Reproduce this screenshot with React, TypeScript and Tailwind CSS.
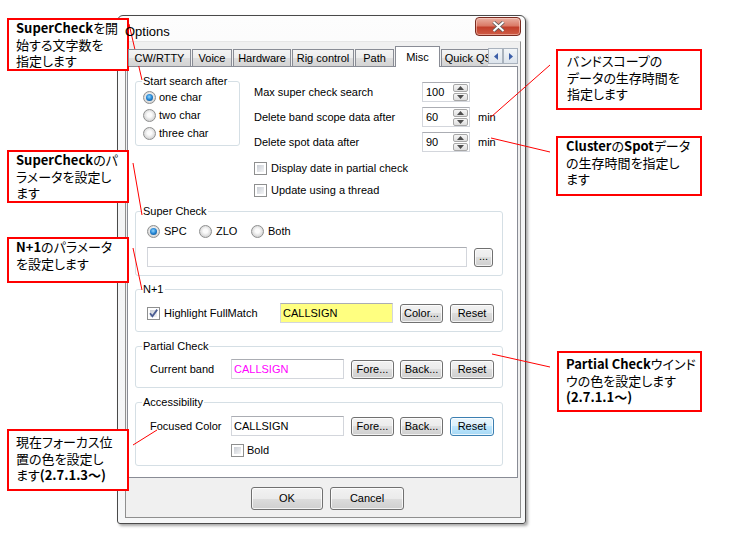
import type { ReactNode } from "react"

const tabs = [
  { label: "CW/RTTY", w: "w-[63px]" },
  { label: "Voice", w: "w-[40px]" },
  { label: "Hardware", w: "w-[58px]" },
  { label: "Rig control", w: "w-[62px]" },
  { label: "Path", w: "w-[39px]" },
  { label: "Misc", w: "w-[45px]", active: true },
  { label: "Quick QSY", w: "w-[62px]" },
]

function Radio({ on }: { on?: boolean }) {
  return (
    <span className="flex h-[13px] w-[13px] shrink-0 items-center justify-center rounded-full border border-[#8e8f8f] bg-[radial-gradient(circle_at_50%_45%,#fbfbfb_25%,#d6d6d6_70%,#ececec)]">
      {on && (
        <span className="h-[7px] w-[7px] rounded-full bg-[radial-gradient(circle_at_45%_40%,#8fd6ff,#2283d2_50%,#0d3f70)]" />
      )}
    </span>
  )
}

function Check({ on }: { on?: boolean }) {
  return (
    <span className="relative flex h-[13px] w-[13px] shrink-0 border border-[#8e8f8f] bg-white p-[2px]">
      <span className="h-full w-full bg-[linear-gradient(135deg,#c9cdd4,#f4f5f6)]" />
      {on && (
        <svg className="absolute left-[-1px] top-[-1px]" width="13" height="13" viewBox="0 0 13 13">
          <path d="M3 6.2 L5.4 9.2 L10.2 2.6" fill="none" stroke="#4a5c92" strokeWidth="1.8" />
        </svg>
      )}
    </span>
  )
}

function Btn({ w, children, focus }: { w: string; children: ReactNode; focus?: boolean }) {
  return (
    <span
      className={`flex h-[19px] shrink-0 items-center justify-center rounded-[3px] border shadow-[inset_0_0_0_1px_rgba(255,255,255,0.75)] ${w} ${
        focus
          ? "border-[#3c7fb1] bg-[linear-gradient(#eaf6fd,#d9f0fc_50%,#bee6fd_50%,#a7d9f5)]"
          : "border-[#707070] bg-[linear-gradient(#f2f2f2,#ebebeb_50%,#dddddd_50%,#cfcfcf)]"
      }`}
    >
      {children}
    </span>
  )
}

function Field({ w, children, className = "" }: { w: string; children?: ReactNode; className?: string }) {
  return (
    <span
      className={`flex h-[20px] shrink-0 items-center border border-[#d3d6dc] border-t-[#abadb3] pl-[2px] ${w} ${className}`}
    >
      {children}
    </span>
  )
}

function Arrow({ up }: { up?: boolean }) {
  return (
    <span className="flex h-[8px] w-[15px] items-center justify-center rounded-[2px] border border-[#a7a7a7] bg-[linear-gradient(#f6f6f6,#dedede)]">
      <svg width="7" height="4" viewBox="0 0 7 4">
        <path d={up ? "M0 4 L3.5 0 L7 4 Z" : "M0 0 L3.5 4 L7 0 Z"} fill="#4d4d4d" />
      </svg>
    </span>
  )
}

function Spin({ value }: { value: string }) {
  return (
    <span className="flex h-[20px] w-[48px] shrink-0 items-center border border-[#d3d6dc] border-t-[#abadb3] bg-white pl-[3px] pr-[1px]">
      <span className="flex-1">{value}</span>
      <span className="flex flex-col gap-[1px]">
        <Arrow up />
        <Arrow />
      </span>
    </span>
  )
}

function Group({ title, h, className = "", children }: { title: string; h: string; className?: string; children: ReactNode }) {
  return (
    <fieldset className={`rounded-[3px] border border-[#d5dfe5] ${h} ${className}`}>
      <legend className="ml-[6px] px-[1px] leading-[14px]">{title}</legend>
      {children}
    </fieldset>
  )
}

function B({ children }: { children: ReactNode }) {
  return <span className="font-bold">{children}</span>
}

function Note({ className, children }: { className: string; children: ReactNode }) {
  return (
    <div
      className={`absolute whitespace-nowrap border-2 border-[#ff0000] bg-white font-['Noto_Sans_CJK_JP',sans-serif] text-[13px] leading-[16.5px] text-black [font-feature-settings:'palt'] ${className}`}
    >
      {children}
    </div>
  )
}

export default function App() {
  return (
    <div className="relative h-[538px] w-[730px] overflow-hidden bg-white font-['Liberation_Sans',Arial,sans-serif] text-[11px] text-black">
      {/* dialog */}
      <div className="ml-[117px] mt-[15px] flex h-[509px] w-[409px] flex-col rounded-t-[6px] rounded-b-[3px] border border-[#4a4a4a] bg-[linear-gradient(180deg,#fdfdfd,#f3f4f5_40%,#f6f7f8)] pb-[5px] pl-[7px] pr-[4px] shadow-[2px_2px_3px_rgba(0,0,0,0.35)]">
        <div className="flex h-[25px] items-start">
          <span className="relative z-20 flex-1 pt-[8px] text-[13px] leading-[15px]">Options</span>
          <span className="mt-[1px] flex h-[19px] w-[46px] items-center justify-center rounded-[4px] border border-[#7a2b20] bg-[linear-gradient(#eab0a2,#da7b68_45%,#c23f2b_55%,#cf5c45)] shadow-[inset_0_0_0_1px_rgba(255,220,210,0.5)]">
            <svg width="13" height="11" viewBox="0 0 13 11">
              <path d="M1.5 1 L11.5 10 M11.5 1 L1.5 10" stroke="#5a5a5a" strokeWidth="3.6" />
              <path d="M1.5 1 L11.5 10 M11.5 1 L1.5 10" stroke="#ffffff" strokeWidth="2" />
            </svg>
          </span>
        </div>

        {/* client area */}
        <div className="flex flex-1 flex-col border border-[#8f8f8f] border-t-[#e6e6e6] bg-[#f0f0f0] pt-[4px]">
          {/* tab strip */}
          <div className="relative z-10 -mb-[1px] ml-[2px] flex h-[21px] w-[390px]">
            <div className="flex flex-1 items-start gap-[1px] overflow-hidden">
              {tabs.map((t) =>
                t.active ? (
                  <span
                    key={t.label}
                    className={`flex h-[21px] shrink-0 justify-center border border-b-0 border-[#898c95] bg-white pt-[3px] leading-[14px] ${t.w}`}
                  >
                    {t.label}
                  </span>
                ) : (
                  <span
                    key={t.label}
                    className={`mt-[3px] flex h-[17px] shrink-0 items-center justify-center whitespace-nowrap border border-b-0 border-[#898c95] bg-[linear-gradient(#f4f4f4,#ececec_50%,#dedede_50%,#d3d3d3)] ${t.w}`}
                  >
                    {t.label}
                  </span>
                )
              )}
            </div>
            <div className="mt-[2px] flex h-[16px]">
              {[true, false].map((left) => (
                <span
                  key={String(left)}
                  className="flex h-[16px] w-[15px] items-center justify-center border border-[#a9b2bd] bg-[linear-gradient(#f2f5f8,#dde4ec)]"
                >
                  <svg width="4" height="7" viewBox="0 0 4 7">
                    <path d={left ? "M4 0 L0 3.5 L4 7 Z" : "M0 0 L4 3.5 L0 7 Z"} fill="#3b5ea8" />
                  </svg>
                </span>
              ))}
            </div>
          </div>

          {/* tab page */}
          <div className="ml-[1px] flex h-[412px] w-[391px] flex-col border border-[#898c95] bg-white pl-[7px] pr-[14px] pt-[7px]">
            <div className="flex h-[127px]">
              <Group title="Start search after" h="h-[72px]" className="w-[105px] shrink-0">
                <div className="flex flex-col pl-[7px]">
                  {["one char", "two char", "three char"].map((l, i) => (
                    <span key={l} className="flex h-[18px] items-center gap-[3px]">
                      <Radio on={i === 0} />
                      {l}
                    </span>
                  ))}
                </div>
              </Group>
              <div className="ml-[14px] flex flex-col pt-[8px]">
                {[
                  ["Max super check search", "100", false],
                  ["Delete band scope data after", "60", true],
                  ["Delete spot data after", "90", true],
                ].map(([l, v, min], i) => (
                  <div key={String(l)} className={`flex h-[20px] items-center ${i > 0 ? "mt-[5px]" : ""}`}>
                    <span className="w-[168px] shrink-0">{l}</span>
                    <Spin value={String(v)} />
                    {min && <span className="ml-[8px]">min</span>}
                  </div>
                ))}
                <div className="mt-[5px] flex h-[22px] items-center gap-[4px]">
                  <Check />
                  Display date in partial check
                </div>
                <div className="flex h-[22px] items-center gap-[4px]">
                  <Check />
                  Update using a thread
                </div>
              </div>
            </div>

            <Group title="Super Check" h="h-[72px]" className="mt-[3px]">
              <div className="pl-[11px] pt-[4px]">
                <div className="flex h-[18px] items-center">
                  {["SPC", "ZLO", "Both"].map((l, i) => (
                    <span key={l} className="flex w-[52px] items-center gap-[4px]">
                      <Radio on={i === 0} />
                      {l}
                    </span>
                  ))}
                </div>
                <div className="mt-[7px] flex items-center">
                  <Field w="w-[320px]" />
                  <Btn w="ml-[7px] w-[19px]">
                    <span className="-mt-[2px]">...</span>
                  </Btn>
                </div>
              </div>
            </Group>

            <Group title="N+1" h="h-[50px]" className="mt-[6px]">
              <div className="flex items-center pl-[11px] pt-[7px]">
                <span className="flex w-[133px] shrink-0 items-center gap-[4px]">
                  <Check on />
                  Highlight FullMatch
                </span>
                <Field w="w-[113px]" className="bg-[#ffff80]">
                  CALLSIGN
                </Field>
                <Btn w="ml-[7px] w-[43px]">Color...</Btn>
                <Btn w="ml-[7px] w-[44px]">Reset</Btn>
              </div>
            </Group>

            <Group title="Partial Check" h="h-[49px]" className="mt-[7px]">
              <div className="flex items-center pl-[14px] pt-[6px]">
                <span className="w-[81px] shrink-0">Current band</span>
                <Field w="w-[113px]" className="bg-white text-[#ff00ff]">
                  CALLSIGN
                </Field>
                <Btn w="ml-[7px] w-[43px]">Fore...</Btn>
                <Btn w="ml-[6px] w-[43px]">Back...</Btn>
                <Btn w="ml-[7px] w-[44px]">Reset</Btn>
              </div>
            </Group>

            <Group title="Accessibility" h="h-[71px]" className="mt-[7px]">
              <div className="pt-[7px]">
                <div className="flex items-center pl-[14px]">
                  <span className="w-[81px] shrink-0">Focused Color</span>
                  <Field w="w-[113px]" className="bg-white">
                    CALLSIGN
                  </Field>
                  <Btn w="ml-[7px] w-[43px]">Fore...</Btn>
                  <Btn w="ml-[6px] w-[43px]">Back...</Btn>
                  <Btn w="ml-[7px] w-[44px]" focus>
                    Reset
                  </Btn>
                </div>
                <div className="mt-[4px] flex h-[20px] items-center gap-[3px] pl-[95px]">
                  <Check />
                  Bold
                </div>
              </div>
            </Group>
          </div>

          {/* bottom buttons */}
          <div className="flex gap-[7px] pl-[125px] pt-[9px]">
            <span className="flex h-[23px] w-[72px] items-center justify-center rounded-[3px] border border-[#707070] bg-[linear-gradient(#f2f2f2,#ebebeb_50%,#dddddd_50%,#cfcfcf)] shadow-[inset_0_0_0_1px_rgba(255,255,255,0.75)]">
              OK
            </span>
            <span className="flex h-[23px] w-[74px] items-center justify-center rounded-[3px] border border-[#707070] bg-[linear-gradient(#f2f2f2,#ebebeb_50%,#dddddd_50%,#cfcfcf)] shadow-[inset_0_0_0_1px_rgba(255,255,255,0.75)]">
              Cancel
            </span>
          </div>
        </div>
      </div>

      {/* annotations */}
      <Note className="left-[7px] top-[18px] h-[53px] w-[122px] pl-[7px]">
        <B>SuperCheck</B>を開
        <br />
        始する文字数を
        <br />
        指定します
      </Note>
      <Note className="left-[556px] top-[49px] h-[61px] w-[146px] pl-[9px] pt-[2px]">
        バンドスコープの
        <br />
        データの生存時間を
        <br />
        指定します
      </Note>
      <Note className="left-[556px] top-[136px] h-[60px] w-[146px] pl-[8px]">
        <B>Cluster</B>の<B>Spot</B>データ
        <br />
        の生存時間を指定し
        <br />
        ます
      </Note>
      <Note className="left-[7px] top-[150px] h-[53px] w-[122px] pl-[7px]">
        <B>SuperCheck</B>のパ
        <br />
        ラメータを設定し
        <br />
        ます
      </Note>
      <Note className="left-[7px] top-[237px] h-[46px] w-[122px] pl-[7px]">
        <B>N+1</B>のパラメータ
        <br />
        を設定します
      </Note>
      <Note className="left-[557px] top-[351px] h-[61px] w-[145px] pl-[7px] pt-[3px]">
        <B>Partial Check</B>ウインド
        <br />
        ウの色を設定します
        <br />
        <B>(2.7.1.1〜)</B>
      </Note>
      <Note className="left-[7px] top-[429px] h-[62px] w-[122px] pl-[7px] pt-[3px]">
        現在フォーカス位
        <br />
        置の色を設定し
        <br />
        ます<B>(2.7.1.3〜)</B>
      </Note>

      <svg className="pointer-events-none absolute left-0 top-0" width="730" height="538">
        <g stroke="#ff0000" strokeWidth="1">
          <line x1="129" y1="24" x2="142" y2="80" />
          <line x1="550" y1="65" x2="491" y2="117" />
          <line x1="491" y1="138" x2="550" y2="152" />
          <line x1="133" y1="163" x2="142" y2="215" />
          <line x1="133" y1="248" x2="142" y2="290" />
          <line x1="492" y1="354" x2="550" y2="367" />
          <line x1="133" y1="445" x2="157" y2="430" />
        </g>
      </svg>
    </div>
  )
}
